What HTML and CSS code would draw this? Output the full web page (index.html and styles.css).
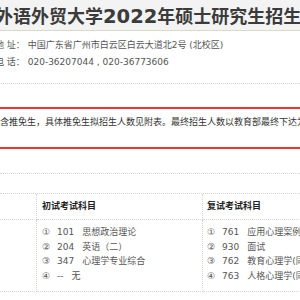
FILE: index.html
```html
<!DOCTYPE html>
<html lang="zh-CN">
<head>
<meta charset="utf-8">
<title>招生简章</title>
<link rel="stylesheet" href="styles.css">
</head>
<body>
<div class="page">
  <h1 class="title">外语外贸大学<span class="yr">2022</span>年硕士研究生招生简章</h1>
  <div class="info">
    <div class="line">地 址：&nbsp;中国广东省广州市白云区白云大道北2号 (北校区)</div>
    <div class="line">电 话：&nbsp;020-36207044 , 020-36773606</div>
  </div>
  <div class="notice">含推免生，具体推免生拟招生人数见附表。最终招生人数以教育部最终下达为准。</div>
  <div class="sep"></div>
  <div class="exam">
    <div class="cell first head"></div>
    <div class="cell mid head">初试考试科目</div>
    <div class="cell last head">复试考试科目</div>
    <div class="cell first body"></div>
    <div class="cell mid body">
      <div class="item"><span class="no">①</span><span class="code">101</span>思想政治理论</div>
      <div class="item"><span class="no">②</span><span class="code">204</span>英语（二）</div>
      <div class="item"><span class="no">③</span><span class="code">347</span>心理学专业综合</div>
      <div class="item"><span class="no">④</span><span class="code">--</span>无</div>
    </div>
    <div class="cell last body">
      <div class="item"><span class="no">①</span><span class="code">761</span>应用心理案例分析</div>
      <div class="item"><span class="no">②</span><span class="code">930</span>面试</div>
      <div class="item"><span class="no">③</span><span class="code">762</span>教育心理学(同等学力加试)</div>
      <div class="item"><span class="no">④</span><span class="code">763</span>人格心理学(同等学力加试)</div>
    </div>
  </div>
</div>
</body>
</html>
```
FILE: styles.css
```css
html, body {
  margin: 0;
  padding: 0;
  overflow: hidden;
  background: #ffffff;
}
body {
  width: 300px;
  height: 300px;
  font-family: "DejaVu Sans", "Noto Sans CJK SC", sans-serif;
  font-size: 9px;
  color: #555;
}
.page {
  width: 300px;
}
.title {
  margin: 0;
  box-sizing: border-box;
  height: 31px;
  padding: 3px 0 0;
  text-indent: -5px;
  line-height: 27px;
  font-size: 18px;
  font-weight: bold;
  color: #3b3b3b;
  background: #f3f3f3;
  border-bottom: 1px solid #d9dcbf;
  white-space: nowrap;
  overflow: hidden;
}
.title .yr {
  font-size: 19.5px;
}
.info {
  margin-left: -5px;
  padding: 6px 0 12px;
  border-bottom: 1px dotted #d4d4d4;
}
.line {
  line-height: 17px;
  white-space: nowrap;
}
.notice {
  margin: 23px -10px 0;
  padding: 6px 10px 18px;
  line-height: 14px;
  color: #333;
  border-top: 2px solid #ee3333;
  border-bottom: 2px solid #ee3333;
  white-space: nowrap;
  overflow: hidden;
}
.sep {
  margin-top: 24px;
  border-top: 1px dotted #d4d4d4;
  width: 300px;
}
.exam {
  margin-top: 19px;
  display: grid;
  grid-template-columns: 37px 166px 160px;
  border-top: 1px dotted #d4d4d4;
}
.cell {
  box-sizing: border-box;
  border-bottom: 1px dotted #d4d4d4;
  white-space: nowrap;
  overflow: hidden;
}
.first, .mid {
  border-right: 1px dotted #d4d4d4;
}
.head {
  height: 26px;
  line-height: 25px;
  font-weight: bold;
  color: #222;
}
.mid {
  padding-left: 5px;
}
.last {
  padding-left: 4px;
}
.body {
  height: 72px;
  padding-top: 5px;
}
.item {
  line-height: 14.7px;
}
.no {
  display: inline-block;
  width: 15px;
}
.code {
  margin-right: 8px;
}
```
